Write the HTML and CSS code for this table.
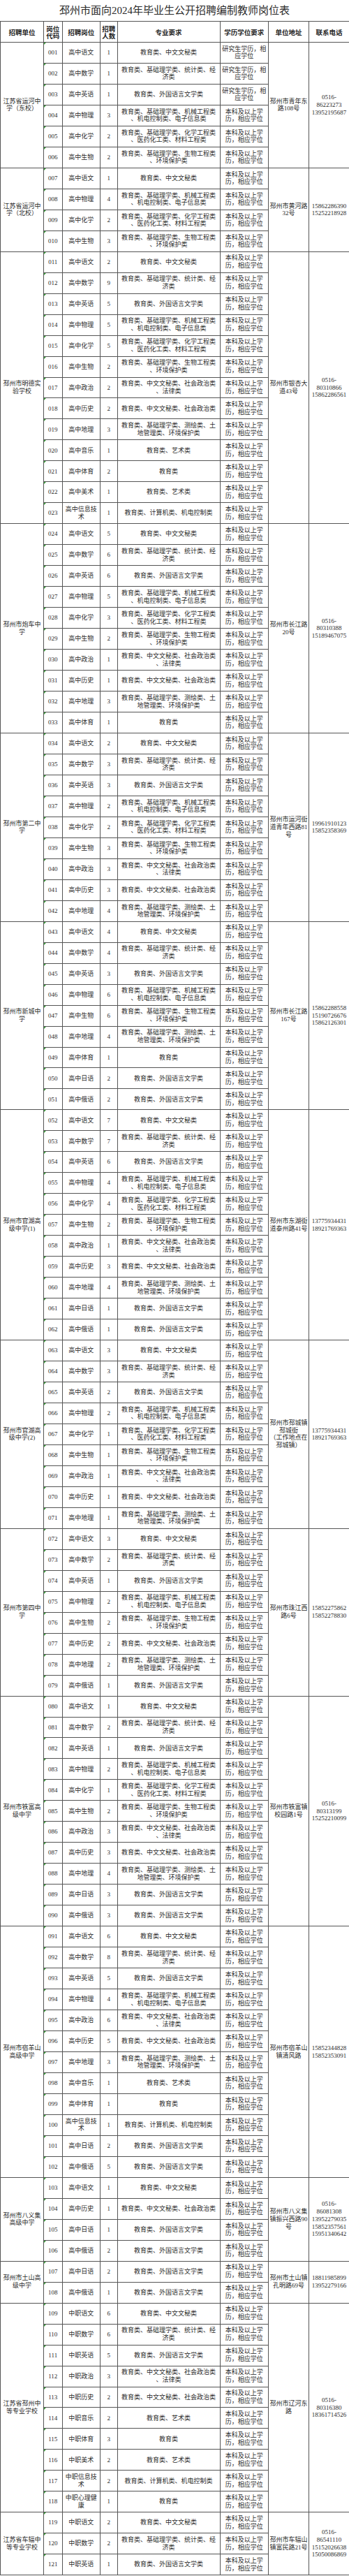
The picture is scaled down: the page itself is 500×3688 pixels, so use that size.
FILE: index.html
```html
<!DOCTYPE html>
<html lang="zh-CN">
<head>
<meta charset="utf-8">
<title>邳州市面向2024年毕业生公开招聘编制教师岗位表</title>
<link rel="stylesheet" href="styles.css">
</head>
<body>
<h1 class="title">邳州市面向2024年毕业生公开招聘编制教师岗位表</h1>
<table class="posts">
<colgroup><col class="w-unit"><col class="w-code"><col class="w-post"><col class="w-num"><col class="w-major"><col class="w-edu"><col class="w-addr"><col class="w-tel"></colgroup>
<thead>
<tr><th>招聘单位</th><th>岗位<br>代码</th><th>招聘岗位</th><th>招聘<br>人数</th><th>专业要求</th><th>学历学位要求</th><th>单位地址</th><th>联系电话</th></tr>
</thead>
<tbody>
<tr><td rowspan="6">江苏省运河中<br>学（东校）</td><td class="c">001</td><td>高中语文</td><td>1</td><td>教育类、中文文秘类</td><td>研究生学历，相<br>应学位</td><td rowspan="6">邳州市青年东<br>路108号</td><td rowspan="6">0516-<br>86223273<br>13952195687</td></tr>
<tr><td class="c">002</td><td>高中数学</td><td>1</td><td>教育类、基础理学类、统计类、经<br>济类</td><td>研究生学历，相<br>应学位</td></tr>
<tr><td class="c">003</td><td>高中英语</td><td>1</td><td>教育类、外国语言文学类</td><td>研究生学历，相<br>应学位</td></tr>
<tr><td class="c">004</td><td>高中物理</td><td>3</td><td>教育类、基础理学类、机械工程类<br>、机电控制类、电子信息类</td><td>本科及以上学<br>历，相应学位</td></tr>
<tr><td class="c">005</td><td>高中化学</td><td>2</td><td>教育类、基础理学类、化学工程类<br>、医药化工类、材料工程类</td><td>本科及以上学<br>历，相应学位</td></tr>
<tr><td class="c">006</td><td>高中生物</td><td>2</td><td>教育类、基础理学类、生物工程类<br>、环境保护类</td><td>本科及以上学<br>历，相应学位</td></tr>

<tr><td rowspan="4">江苏省运河中<br>学（北校）</td><td class="c">007</td><td>高中语文</td><td>1</td><td>教育类、中文文秘类</td><td>本科及以上学<br>历，相应学位</td><td rowspan="4">邳州市黄河路<br>32号</td><td rowspan="4">15862286390<br>15252218928</td></tr>
<tr><td class="c">008</td><td>高中物理</td><td>4</td><td>教育类、基础理学类、机械工程类<br>、机电控制类、电子信息类</td><td>本科及以上学<br>历，相应学位</td></tr>
<tr><td class="c">009</td><td>高中化学</td><td>2</td><td>教育类、基础理学类、化学工程类<br>、医药化工类、材料工程类</td><td>本科及以上学<br>历，相应学位</td></tr>
<tr><td class="c">010</td><td>高中生物</td><td>3</td><td>教育类、基础理学类、生物工程类<br>、环境保护类</td><td>本科及以上学<br>历，相应学位</td></tr>

<tr><td rowspan="13">邳州市明德实<br>验学校</td><td class="c">011</td><td>高中语文</td><td>2</td><td>教育类、中文文秘类</td><td>本科及以上学<br>历，相应学位</td><td rowspan="13">邳州市银杏大<br>道43号</td><td rowspan="13">0516-<br>80310866<br>15862286561</td></tr>
<tr><td class="c">012</td><td>高中数学</td><td>9</td><td>教育类、基础理学类、统计类、经<br>济类</td><td>本科及以上学<br>历，相应学位</td></tr>
<tr><td class="c">013</td><td>高中英语</td><td>5</td><td>教育类、外国语言文学类</td><td>本科及以上学<br>历，相应学位</td></tr>
<tr><td class="c">014</td><td>高中物理</td><td>5</td><td>教育类、基础理学类、机械工程类<br>、机电控制类、电子信息类</td><td>本科及以上学<br>历，相应学位</td></tr>
<tr><td class="c">015</td><td>高中化学</td><td>5</td><td>教育类、基础理学类、化学工程类<br>、医药化工类、材料工程类</td><td>本科及以上学<br>历，相应学位</td></tr>
<tr><td class="c">016</td><td>高中生物</td><td>2</td><td>教育类、基础理学类、生物工程类<br>、环境保护类</td><td>本科及以上学<br>历，相应学位</td></tr>
<tr><td class="c">017</td><td>高中政治</td><td>2</td><td>教育类、中文文秘类、社会政治类<br>、法律类</td><td>本科及以上学<br>历，相应学位</td></tr>
<tr><td class="c">018</td><td>高中历史</td><td>2</td><td>教育类、中文文秘类、社会政治类</td><td>本科及以上学<br>历，相应学位</td></tr>
<tr><td class="c">019</td><td>高中地理</td><td>3</td><td>教育类、基础理学类、测绘类、土<br>地管理类、环境保护类</td><td>本科及以上学<br>历，相应学位</td></tr>
<tr><td class="c">020</td><td>高中音乐</td><td>1</td><td>教育类、艺术类</td><td>本科及以上学<br>历，相应学位</td></tr>
<tr><td class="c">021</td><td>高中体育</td><td>2</td><td>教育类</td><td>本科及以上学<br>历，相应学位</td></tr>
<tr><td class="c">022</td><td>高中美术</td><td>1</td><td>教育类、艺术类</td><td>本科及以上学<br>历，相应学位</td></tr>
<tr><td class="c">023</td><td>高中信息技<br>术</td><td>1</td><td>教育类、计算机类、机电控制类</td><td>本科及以上学<br>历，相应学位</td></tr>

<tr><td rowspan="10">邳州市炮车中<br>学</td><td class="c">024</td><td>高中语文</td><td>5</td><td>教育类、中文文秘类</td><td>本科及以上学<br>历，相应学位</td><td rowspan="10">邳州市长江路<br>20号</td><td rowspan="10">0516-<br>80310388<br>15189467075</td></tr>
<tr><td class="c">025</td><td>高中数学</td><td>6</td><td>教育类、基础理学类、统计类、经<br>济类</td><td>本科及以上学<br>历，相应学位</td></tr>
<tr><td class="c">026</td><td>高中英语</td><td>6</td><td>教育类、外国语言文学类</td><td>本科及以上学<br>历，相应学位</td></tr>
<tr><td class="c">027</td><td>高中物理</td><td>5</td><td>教育类、基础理学类、机械工程类<br>、机电控制类、电子信息类</td><td>本科及以上学<br>历，相应学位</td></tr>
<tr><td class="c">028</td><td>高中化学</td><td>3</td><td>教育类、基础理学类、化学工程类<br>、医药化工类、材料工程类</td><td>本科及以上学<br>历，相应学位</td></tr>
<tr><td class="c">029</td><td>高中生物</td><td>2</td><td>教育类、基础理学类、生物工程类<br>、环境保护类</td><td>本科及以上学<br>历，相应学位</td></tr>
<tr><td class="c">030</td><td>高中政治</td><td>1</td><td>教育类、中文文秘类、社会政治类<br>、法律类</td><td>本科及以上学<br>历，相应学位</td></tr>
<tr><td class="c">031</td><td>高中历史</td><td>1</td><td>教育类、中文文秘类、社会政治类</td><td>本科及以上学<br>历，相应学位</td></tr>
<tr><td class="c">032</td><td>高中地理</td><td>3</td><td>教育类、基础理学类、测绘类、土<br>地管理类、环境保护类</td><td>本科及以上学<br>历，相应学位</td></tr>
<tr><td class="c">033</td><td>高中体育</td><td>1</td><td>教育类</td><td>本科及以上学<br>历，相应学位</td></tr>

<tr><td rowspan="9">邳州市第二中<br>学</td><td class="c">034</td><td>高中语文</td><td>2</td><td>教育类、中文文秘类</td><td>本科及以上学<br>历，相应学位</td><td rowspan="9">邳州市运河街<br>道青年西路81<br>号</td><td rowspan="9">19961910123<br>15852358369</td></tr>
<tr><td class="c">035</td><td>高中数学</td><td>3</td><td>教育类、基础理学类、统计类、经<br>济类</td><td>本科及以上学<br>历，相应学位</td></tr>
<tr><td class="c">036</td><td>高中英语</td><td>3</td><td>教育类、外国语言文学类</td><td>本科及以上学<br>历，相应学位</td></tr>
<tr><td class="c">037</td><td>高中物理</td><td>2</td><td>教育类、基础理学类、机械工程类<br>、机电控制类、电子信息类</td><td>本科及以上学<br>历，相应学位</td></tr>
<tr><td class="c">038</td><td>高中化学</td><td>2</td><td>教育类、基础理学类、化学工程类<br>、医药化工类、材料工程类</td><td>本科及以上学<br>历，相应学位</td></tr>
<tr><td class="c">039</td><td>高中生物</td><td>3</td><td>教育类、基础理学类、生物工程类<br>、环境保护类</td><td>本科及以上学<br>历，相应学位</td></tr>
<tr><td class="c">040</td><td>高中政治</td><td>3</td><td>教育类、中文文秘类、社会政治类<br>、法律类</td><td>本科及以上学<br>历，相应学位</td></tr>
<tr><td class="c">041</td><td>高中历史</td><td>3</td><td>教育类、中文文秘类、社会政治类</td><td>本科及以上学<br>历，相应学位</td></tr>
<tr><td class="c">042</td><td>高中地理</td><td>4</td><td>教育类、基础理学类、测绘类、土<br>地管理类、环境保护类</td><td>本科及以上学<br>历，相应学位</td></tr>

<tr><td rowspan="9">邳州市新城中<br>学</td><td class="c">043</td><td>高中语文</td><td>4</td><td>教育类、中文文秘类</td><td>本科及以上学<br>历，相应学位</td><td rowspan="9">邳州市长江路<br>167号</td><td rowspan="9">15862288558<br>15190726676<br>15862126301</td></tr>
<tr><td class="c">044</td><td>高中数学</td><td>4</td><td>教育类、基础理学类、统计类、经<br>济类</td><td>本科及以上学<br>历，相应学位</td></tr>
<tr><td class="c">045</td><td>高中英语</td><td>3</td><td>教育类、外国语言文学类</td><td>本科及以上学<br>历，相应学位</td></tr>
<tr><td class="c">046</td><td>高中物理</td><td>6</td><td>教育类、基础理学类、机械工程类<br>、机电控制类、电子信息类</td><td>本科及以上学<br>历，相应学位</td></tr>
<tr><td class="c">047</td><td>高中生物</td><td>6</td><td>教育类、基础理学类、生物工程类<br>、环境保护类</td><td>本科及以上学<br>历，相应学位</td></tr>
<tr><td class="c">048</td><td>高中地理</td><td>4</td><td>教育类、基础理学类、测绘类、土<br>地管理类、环境保护类</td><td>本科及以上学<br>历，相应学位</td></tr>
<tr><td class="c">049</td><td>高中体育</td><td>1</td><td>教育类</td><td>本科及以上学<br>历，相应学位</td></tr>
<tr><td class="c">050</td><td>高中日语</td><td>2</td><td>教育类、外国语言文学类</td><td>本科及以上学<br>历，相应学位</td></tr>
<tr><td class="c">051</td><td>高中俄语</td><td>2</td><td>教育类、外国语言文学类</td><td>本科及以上学<br>历，相应学位</td></tr>

<tr><td rowspan="11">邳州市官湖高<br>级中学(1)</td><td class="c">052</td><td>高中语文</td><td>7</td><td>教育类、中文文秘类</td><td>本科及以上学<br>历，相应学位</td><td rowspan="11">邳州市东湖街<br>道泰州路41号</td><td rowspan="11">13775934431<br>18921769363</td></tr>
<tr><td class="c">053</td><td>高中数学</td><td>7</td><td>教育类、基础理学类、统计类、经<br>济类</td><td>本科及以上学<br>历，相应学位</td></tr>
<tr><td class="c">054</td><td>高中英语</td><td>6</td><td>教育类、外国语言文学类</td><td>本科及以上学<br>历，相应学位</td></tr>
<tr><td class="c">055</td><td>高中物理</td><td>4</td><td>教育类、基础理学类、机械工程类<br>、机电控制类、电子信息类</td><td>本科及以上学<br>历，相应学位</td></tr>
<tr><td class="c">056</td><td>高中化学</td><td>4</td><td>教育类、基础理学类、化学工程类<br>、医药化工类、材料工程类</td><td>本科及以上学<br>历，相应学位</td></tr>
<tr><td class="c">057</td><td>高中生物</td><td>2</td><td>教育类、基础理学类、生物工程类<br>、环境保护类</td><td>本科及以上学<br>历，相应学位</td></tr>
<tr><td class="c">058</td><td>高中政治</td><td>1</td><td>教育类、中文文秘类、社会政治类<br>、法律类</td><td>本科及以上学<br>历，相应学位</td></tr>
<tr><td class="c">059</td><td>高中历史</td><td>3</td><td>教育类、中文文秘类、社会政治类</td><td>本科及以上学<br>历，相应学位</td></tr>
<tr><td class="c">060</td><td>高中地理</td><td>4</td><td>教育类、基础理学类、测绘类、土<br>地管理类、环境保护类</td><td>本科及以上学<br>历，相应学位</td></tr>
<tr><td class="c">061</td><td>高中日语</td><td>1</td><td>教育类、外国语言文学类</td><td>本科及以上学<br>历，相应学位</td></tr>
<tr><td class="c">062</td><td>高中俄语</td><td>1</td><td>教育类、外国语言文学类</td><td>本科及以上学<br>历，相应学位</td></tr>

<tr><td rowspan="9">邳州市官湖高<br>级中学(2)</td><td class="c">063</td><td>高中语文</td><td>3</td><td>教育类、中文文秘类</td><td>本科及以上学<br>历，相应学位</td><td rowspan="9">邳州市邳城镇<br>邳城街<br>（工作地点在<br>邳城镇）</td><td rowspan="9">13775934431<br>18921769363</td></tr>
<tr><td class="c">064</td><td>高中数学</td><td>3</td><td>教育类、基础理学类、统计类、经<br>济类</td><td>本科及以上学<br>历，相应学位</td></tr>
<tr><td class="c">065</td><td>高中英语</td><td>2</td><td>教育类、外国语言文学类</td><td>本科及以上学<br>历，相应学位</td></tr>
<tr><td class="c">066</td><td>高中物理</td><td>2</td><td>教育类、基础理学类、机械工程类<br>、机电控制类、电子信息类</td><td>本科及以上学<br>历，相应学位</td></tr>
<tr><td class="c">067</td><td>高中化学</td><td>1</td><td>教育类、基础理学类、化学工程类<br>、医药化工类、材料工程类</td><td>本科及以上学<br>历，相应学位</td></tr>
<tr><td class="c">068</td><td>高中生物</td><td>1</td><td>教育类、基础理学类、生物工程类<br>、环境保护类</td><td>本科及以上学<br>历，相应学位</td></tr>
<tr><td class="c">069</td><td>高中政治</td><td>1</td><td>教育类、中文文秘类、社会政治类<br>、法律类</td><td>本科及以上学<br>历，相应学位</td></tr>
<tr><td class="c">070</td><td>高中历史</td><td>1</td><td>教育类、中文文秘类、社会政治类</td><td>本科及以上学<br>历，相应学位</td></tr>
<tr><td class="c">071</td><td>高中地理</td><td>1</td><td>教育类、基础理学类、测绘类、土<br>地管理类、环境保护类</td><td>本科及以上学<br>历，相应学位</td></tr>

<tr><td rowspan="8">邳州市第四中<br>学</td><td class="c">072</td><td>高中语文</td><td>3</td><td>教育类、中文文秘类</td><td>本科及以上学<br>历，相应学位</td><td rowspan="8">邳州市珠江西<br>路6号</td><td rowspan="8">15852275862<br>15852278830</td></tr>
<tr><td class="c">073</td><td>高中数学</td><td>2</td><td>教育类、基础理学类、统计类、经<br>济类</td><td>本科及以上学<br>历，相应学位</td></tr>
<tr><td class="c">074</td><td>高中英语</td><td>1</td><td>教育类、外国语言文学类</td><td>本科及以上学<br>历，相应学位</td></tr>
<tr><td class="c">075</td><td>高中物理</td><td>2</td><td>教育类、基础理学类、机械工程类<br>、机电控制类、电子信息类</td><td>本科及以上学<br>历，相应学位</td></tr>
<tr><td class="c">076</td><td>高中生物</td><td>2</td><td>教育类、基础理学类、生物工程类<br>、环境保护类</td><td>本科及以上学<br>历，相应学位</td></tr>
<tr><td class="c">077</td><td>高中历史</td><td>2</td><td>教育类、中文文秘类、社会政治类</td><td>本科及以上学<br>历，相应学位</td></tr>
<tr><td class="c">078</td><td>高中地理</td><td>2</td><td>教育类、基础理学类、测绘类、土<br>地管理类、环境保护类</td><td>本科及以上学<br>历，相应学位</td></tr>
<tr><td class="c">079</td><td>高中俄语</td><td>1</td><td>教育类、外国语言文学类</td><td>本科及以上学<br>历，相应学位</td></tr>

<tr><td rowspan="11">邳州市铁富高<br>级中学</td><td class="c">080</td><td>高中语文</td><td>1</td><td>教育类、中文文秘类</td><td>本科及以上学<br>历，相应学位</td><td rowspan="11">邳州市铁富镇<br>校园路1号</td><td rowspan="11">0516-<br>80313199<br>15252210099</td></tr>
<tr><td class="c">081</td><td>高中数学</td><td>2</td><td>教育类、基础理学类、统计类、经<br>济类</td><td>本科及以上学<br>历，相应学位</td></tr>
<tr><td class="c">082</td><td>高中英语</td><td>1</td><td>教育类、外国语言文学类</td><td>本科及以上学<br>历，相应学位</td></tr>
<tr><td class="c">083</td><td>高中物理</td><td>2</td><td>教育类、基础理学类、机械工程类<br>、机电控制类、电子信息类</td><td>本科及以上学<br>历，相应学位</td></tr>
<tr><td class="c">084</td><td>高中化学</td><td>1</td><td>教育类、基础理学类、化学工程类<br>、医药化工类、材料工程类</td><td>本科及以上学<br>历，相应学位</td></tr>
<tr><td class="c">085</td><td>高中生物</td><td>2</td><td>教育类、基础理学类、生物工程类<br>、环境保护类</td><td>本科及以上学<br>历，相应学位</td></tr>
<tr><td class="c">086</td><td>高中政治</td><td>3</td><td>教育类、中文文秘类、社会政治类<br>、法律类</td><td>本科及以上学<br>历，相应学位</td></tr>
<tr><td class="c">087</td><td>高中历史</td><td>3</td><td>教育类、中文文秘类、社会政治类</td><td>本科及以上学<br>历，相应学位</td></tr>
<tr><td class="c">088</td><td>高中地理</td><td>4</td><td>教育类、基础理学类、测绘类、土<br>地管理类、环境保护类</td><td>本科及以上学<br>历，相应学位</td></tr>
<tr><td class="c">089</td><td>高中日语</td><td>3</td><td>教育类、外国语言文学类</td><td>本科及以上学<br>历，相应学位</td></tr>
<tr><td class="c">090</td><td>高中俄语</td><td>3</td><td>教育类、外国语言文学类</td><td>本科及以上学<br>历，相应学位</td></tr>

<tr><td rowspan="12">邳州市宿羊山<br>高级中学</td><td class="c">091</td><td>高中语文</td><td>6</td><td>教育类、中文文秘类</td><td>本科及以上学<br>历，相应学位</td><td rowspan="12">邳州市宿羊山<br>镇清风路</td><td rowspan="12">15852344828<br>15852353091</td></tr>
<tr><td class="c">092</td><td>高中数学</td><td>8</td><td>教育类、基础理学类、统计类、经<br>济类</td><td>本科及以上学<br>历，相应学位</td></tr>
<tr><td class="c">093</td><td>高中英语</td><td>5</td><td>教育类、外国语言文学类</td><td>本科及以上学<br>历，相应学位</td></tr>
<tr><td class="c">094</td><td>高中物理</td><td>4</td><td>教育类、基础理学类、机械工程类<br>、机电控制类、电子信息类</td><td>本科及以上学<br>历，相应学位</td></tr>
<tr><td class="c">095</td><td>高中政治</td><td>6</td><td>教育类、中文文秘类、社会政治类<br>、法律类</td><td>本科及以上学<br>历，相应学位</td></tr>
<tr><td class="c">096</td><td>高中历史</td><td>5</td><td>教育类、中文文秘类、社会政治类</td><td>本科及以上学<br>历，相应学位</td></tr>
<tr><td class="c">097</td><td>高中地理</td><td>3</td><td>教育类、基础理学类、测绘类、土<br>地管理类、环境保护类</td><td>本科及以上学<br>历，相应学位</td></tr>
<tr><td class="c">098</td><td>高中音乐</td><td>1</td><td>教育类、艺术类</td><td>本科及以上学<br>历，相应学位</td></tr>
<tr><td class="c">099</td><td>高中体育</td><td>1</td><td>教育类</td><td>本科及以上学<br>历，相应学位</td></tr>
<tr><td class="c">100</td><td>高中信息技<br>术</td><td>1</td><td>教育类、计算机类、机电控制类</td><td>本科及以上学<br>历，相应学位</td></tr>
<tr><td class="c">101</td><td>高中日语</td><td>2</td><td>教育类、外国语言文学类</td><td>本科及以上学<br>历，相应学位</td></tr>
<tr><td class="c">102</td><td>高中俄语</td><td>5</td><td>教育类、外国语言文学类</td><td>本科及以上学<br>历，相应学位</td></tr>

<tr><td rowspan="4">邳州市八义集<br>高级中学</td><td class="c">103</td><td>高中语文</td><td>1</td><td>教育类、中文文秘类</td><td>本科及以上学<br>历，相应学位</td><td rowspan="4">邳州市八义集<br>镇振兴西路90<br>号</td><td rowspan="4">0516-<br>86081308<br>13952279035<br>15852357561<br>15951340642</td></tr>
<tr><td class="c">104</td><td>高中历史</td><td>1</td><td>教育类、中文文秘类、社会政治类</td><td>本科及以上学<br>历，相应学位</td></tr>
<tr><td class="c">105</td><td>高中日语</td><td>1</td><td>教育类、外国语言文学类</td><td>本科及以上学<br>历，相应学位</td></tr>
<tr><td class="c">106</td><td>高中俄语</td><td>2</td><td>教育类、外国语言文学类</td><td>本科及以上学<br>历，相应学位</td></tr>

<tr><td rowspan="2">邳州市土山高<br>级中学</td><td class="c">107</td><td>高中日语</td><td>2</td><td>教育类、外国语言文学类</td><td>本科及以上学<br>历，相应学位</td><td rowspan="2">邳州市土山镇<br>孔明路69号</td><td rowspan="2">18811985899<br>13952279166</td></tr>
<tr><td class="c">108</td><td>高中俄语</td><td>1</td><td>教育类、外国语言文学类</td><td>本科及以上学<br>历，相应学位</td></tr>

<tr><td rowspan="10">江苏省邳州中<br>等专业学校</td><td class="c">109</td><td>中职语文</td><td>6</td><td>教育类、中文文秘类</td><td>本科及以上学<br>历，相应学位</td><td rowspan="10">邳州市辽河东<br>路</td><td rowspan="10">0516-<br>80316380<br>18361714526</td></tr>
<tr><td class="c">110</td><td>中职数学</td><td>6</td><td>教育类、基础理学类、统计类、经<br>济类</td><td>本科及以上学<br>历，相应学位</td></tr>
<tr><td class="c">111</td><td>中职英语</td><td>5</td><td>教育类、外国语言文学类</td><td>本科及以上学<br>历，相应学位</td></tr>
<tr><td class="c">112</td><td>中职政治</td><td>3</td><td>教育类、中文文秘类、社会政治类<br>、法律类</td><td>本科及以上学<br>历，相应学位</td></tr>
<tr><td class="c">113</td><td>中职历史</td><td>2</td><td>教育类、中文文秘类、社会政治类</td><td>本科及以上学<br>历，相应学位</td></tr>
<tr><td class="c">114</td><td>中职音乐</td><td>2</td><td>教育类、艺术类</td><td>本科及以上学<br>历，相应学位</td></tr>
<tr><td class="c">115</td><td>中职体育</td><td>3</td><td>教育类</td><td>本科及以上学<br>历，相应学位</td></tr>
<tr><td class="c">116</td><td>中职美术</td><td>2</td><td>教育类、艺术类</td><td>本科及以上学<br>历，相应学位</td></tr>
<tr><td class="c">117</td><td>中职信息技<br>术</td><td>2</td><td>教育类、计算机类、机电控制类</td><td>本科及以上学<br>历，相应学位</td></tr>
<tr><td class="c">118</td><td>中职心理健<br>康</td><td>1</td><td>教育类</td><td>本科及以上学<br>历，相应学位</td></tr>

<tr><td rowspan="3">江苏省车辐中<br>等专业学校</td><td class="c">119</td><td>中职语文</td><td>2</td><td>教育类、中文文秘类</td><td>本科及以上学<br>历，相应学位</td><td rowspan="3">邳州市车辐山<br>镇富民路21号</td><td rowspan="3">0516-<br>86541110<br>15152026638<br>15050086869</td></tr>
<tr><td class="c">120</td><td>中职数学</td><td>2</td><td>教育类、基础理学类、统计类、经<br>济类</td><td>本科及以上学<br>历，相应学位</td></tr>
<tr><td class="c">121</td><td>中职英语</td><td>1</td><td>教育类、外国语言文学类</td><td>本科及以上学<br>历，相应学位</td></tr>
</tbody>
</table>
</body>
</html>
```

FILE: styles.css
```css
html, body {
  margin: 0;
  padding: 0;
  background: #fff;
}
body {
  width: 500px;
}
.title {
  margin: 0;
  height: 30px;
  line-height: 30px;
  text-align: center;
  font-family: "Liberation Serif", "Noto Sans CJK SC", serif;
  font-size: 15px;
  font-weight: 400;
  color: #2a2a2a;
  white-space: nowrap;
}
.posts {
  width: 500px;
  table-layout: fixed;
  border-collapse: collapse;
  font-family: "Liberation Serif", "Noto Sans CJK SC", serif;
  font-size: 9px;
  line-height: 10.7px;
  color: #2a2a2a;
}
.w-unit { width: 62px; }
.w-code { width: 26.5px; }
.w-post { width: 54.5px; }
.w-num { width: 24.5px; }
.w-major { width: 147px; }
.w-edu { width: 69.5px; }
.w-addr { width: 58px; }
.w-tel { width: 58px; }

.posts th,
.posts td {
  border: 1px solid #555;
  padding: 0;
  text-align: center;
  vertical-align: middle;
  white-space: nowrap;
  overflow: hidden;
}
.posts thead tr {
  height: 30px;
}
.posts tbody tr {
  height: 29.97px;
}
.posts th {
  font-family: "Noto Sans CJK SC", sans-serif;
  font-size: 9.5px;
  line-height: 10px;
  font-weight: 700;
  color: #222;
}
.posts td.c {
  position: relative;
}
.posts td.c::before {
  content: "";
  position: absolute;
  left: 0;
  top: 0;
  width: 0;
  height: 0;
  border-top: 3px solid #3a9a3a;
  border-right: 3px solid transparent;
}
```
